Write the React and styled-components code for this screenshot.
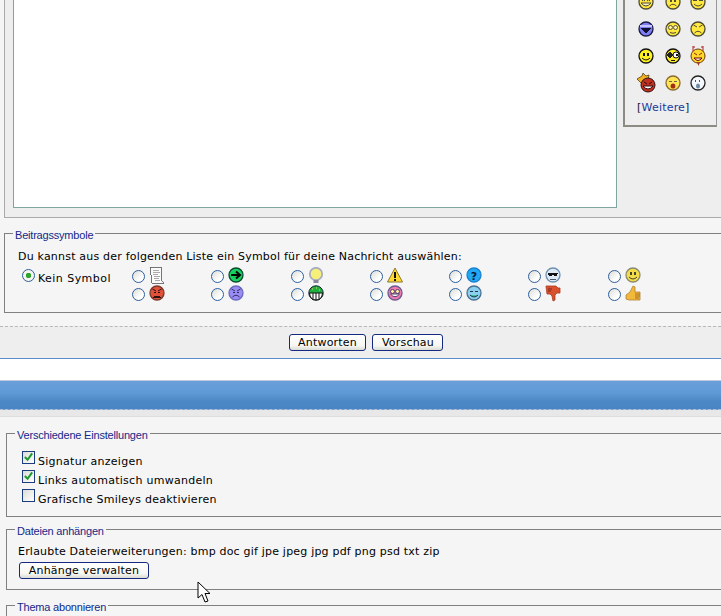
import React from "react";
import styled, { createGlobalStyle } from "styled-components";

const GlobalStyle = createGlobalStyle`
  html, body {
    margin: 0;
    padding: 0;
    background: #f5f5f5;
  }
`;

const Face = ({ fill = "#ffe840", line = "#4f4a35", children }) => (
  <svg width="16" height="16" viewBox="0 0 16 16" shapeRendering="crispEdges">
    <circle cx="8" cy="8" r="7" fill={fill} stroke={line} strokeWidth="1.3" shapeRendering="auto" />
    {children}
  </svg>
);

const Eyes = ({ color = "#333" }) => (
  <>
    <rect x="5" y="5" width="2" height="3" fill={color} />
    <rect x="9" y="5" width="2" height="3" fill={color} />
  </>
);

const RingEyes = ({ color = "#554" }) => (
  <>
    <circle cx="5.5" cy="6.5" r="2" fill="#fff3a0" stroke={color} shapeRendering="auto" />
    <circle cx="10.5" cy="6.5" r="2" fill="#fff3a0" stroke={color} shapeRendering="auto" />
  </>
);

const Smile = ({ color = "#333" }) => (
  <path d="M4 10 Q8 14 12 10" fill="none" stroke={color} shapeRendering="auto" />
);

const Frown = ({ color = "#333" }) => (
  <path d="M4.5 12 Q8 8.5 11.5 12" fill="none" stroke={color} shapeRendering="auto" />
);

const Brows = ({ color = "#333" }) => (
  <path d="M3.5 4 L7 6 M12.5 4 L9 6" fill="none" stroke={color} shapeRendering="auto" />
);

const icons = {
  laugh: (
    <Face>
      <path d="M4 7 Q5.5 4.5 7 7 M9 7 Q10.5 4.5 12 7" fill="none" stroke="#4f4a35" shapeRendering="auto" />
      <path d="M3 9 H13 Q8 15 3 9Z" fill="#fff6c0" stroke="#4f4a35" shapeRendering="auto" />
    </Face>
  ),
  unsure: (
    <Face>
      <path d="M4 5 H7 M9 5 H12" stroke="#6a6548" />
      <rect x="5" y="6" width="2" height="2" fill="#4f4a35" />
      <rect x="9" y="6" width="2" height="2" fill="#4f4a35" />
      <Frown color="#4f4a35" />
    </Face>
  ),
  shades: (
    <Face>
      <rect x="3" y="4" width="4" height="3" fill="#4f4a35" />
      <rect x="9" y="4" width="4" height="3" fill="#4f4a35" />
      <rect x="3" y="4" width="10" height="1" fill="#4f4a35" />
      <Smile color="#4f4a35" />
    </Face>
  ),
  purple: (
    <Face fill="#7d7df5" line="#1a1a40">
      <rect x="2" y="4" width="12" height="2" fill="#c5c5ff" />
      <path d="M2.5 7 H13.5 L8 13Z" fill="#101030" />
    </Face>
  ),
  rolleyes: (
    <Face>
      <RingEyes />
      <path d="M5 11.5 Q8 13 11 11.5" fill="none" stroke="#4f4a35" shapeRendering="auto" />
    </Face>
  ),
  frown: (
    <Face>
      <Brows color="#4f4a35" />
      <Frown color="#4f4a35" />
    </Face>
  ),
  smile: (
    <Face fill="#ffef20" line="#111">
      <Eyes color="#111" />
      <Smile color="#111" />
    </Face>
  ),
  wink: (
    <Face fill="#ffef20" line="#111">
      <circle cx="5" cy="7" r="2.6" fill="#222" />
      <circle cx="11" cy="7" r="3" fill="#fff" stroke="#111" shapeRendering="auto" />
      <rect x="11" y="6" width="2" height="2" fill="#111" />
      <path d="M6 12 H10" stroke="#111" />
    </Face>
  ),
  devil: (
    <svg width="16" height="20" viewBox="0 0 16 20">
      <path d="M3 5 L3 0 M13 5 L13 0 M3 1 H5 M13 1 H11" stroke="#b02020" fill="none" />
      <circle cx="8" cy="10" r="7" fill="#ffd92a" stroke="#6a3a10" />
      <path d="M4 7 L7 9 M12 7 L9 9" stroke="#a02010" />
      <path d="M4 12 H12 Q8 17 4 12Z" fill="#fff" stroke="#700" />
      <path d="M7 16 H10 L8.5 20Z" fill="#a03a20" />
    </svg>
  ),
  king: (
    <svg width="20" height="20" viewBox="0 0 20 20">
      <path d="M1 6 L6 3 L7 0 L10 3 L13 2 L12 7 L5 10Z" fill="#f0b020" stroke="#5a4010" strokeWidth="0.8" />
      <circle cx="12" cy="12" r="7" fill="#c03020" stroke="#301010" />
      <path d="M7 13 H17 Q12 19 7 13Z" fill="#fff" stroke="#301010" />
      <path d="M8 9 L11 11 M16 9 L13 11" stroke="#301010" />
    </svg>
  ),
  yawn: (
    <Face fill="#ffe455" line="#8a6a30">
      <path d="M4 6 H7 M9 6 H12" stroke="#664" />
      <ellipse cx="8" cy="11" rx="2.4" ry="2.6" fill="#a03010" shapeRendering="auto" />
    </Face>
  ),
  ghost: (
    <Face fill="#f4f8fc" line="#222">
      <rect x="5" y="5" width="1" height="2" fill="#555" />
      <rect x="9" y="5" width="1" height="2" fill="#555" />
      <ellipse cx="8" cy="11" rx="2" ry="2.6" fill="#6a8aa8" shapeRendering="auto" />
    </Face>
  ),
  note: (
    <svg width="16" height="17" viewBox="0 0 16 17" shapeRendering="crispEdges">
      <path d="M1 0 H12 V13 L15 16 H3 Z" fill="#fafafa" stroke="#555" strokeWidth="0.8" />
      <path d="M4 3 H10 M4 5 H11 M4 7 H9 M5 9 H11 M5 11 H10 M6 13 H11" stroke="#aaa" />
    </svg>
  ),
  angry: (
    <Face fill="#e0523a" line="#7a3a2a">
      <Brows color="#301010" />
      <rect x="5" y="7" width="2" height="1" fill="#301010" />
      <rect x="9" y="7" width="2" height="1" fill="#301010" />
      <path d="M4 12 H12 M5 11 H11" stroke="#301010" />
    </Face>
  ),
  arrow: (
    <Face fill="#18d060" line="#0a4a30">
      <path d="M3 8 H11 M8 4.5 L12 8 L8 11.5" fill="none" stroke="#000" strokeWidth="2" shapeRendering="auto" />
    </Face>
  ),
  sadPurple: (
    <Face fill="#9a8af5" line="#6a6ac0">
      <Brows color="#303060" />
      <rect x="5" y="7" width="2" height="1" fill="#303060" />
      <rect x="9" y="7" width="2" height="1" fill="#303060" />
      <Frown color="#303060" />
    </Face>
  ),
  bulb: (
    <svg width="16" height="17" viewBox="0 0 16 17">
      <circle cx="8" cy="7" r="6.2" fill="#f6f07a" stroke="#a8aec0" strokeWidth="1.8" />
      <rect x="5.5" y="13" width="5" height="3" fill="#8a8a9a" />
    </svg>
  ),
  grin: (
    <svg width="16" height="16" viewBox="0 0 16 16">
      <circle cx="8" cy="8" r="7.2" fill="#20b040" stroke="#123" />
      <path d="M1.5 8 H14.5 Q14 15 8 15 Q2 15 1.5 8Z" fill="#fff" stroke="#111" />
      <path d="M5 8 V15 M8 8 V15 M11 8 V15" stroke="#111" />
      <path d="M4 4 H5 M8 3 H9 M11 5 H12" stroke="#e8e060" />
    </svg>
  ),
  warning: (
    <svg width="16" height="16" viewBox="0 0 16 16">
      <path d="M8 1 L15.5 15 H0.5Z" fill="#ffd830" stroke="#8a7a30" />
      <rect x="7" y="5" width="2" height="6" fill="#111" />
      <rect x="7" y="12" width="2" height="2" fill="#111" />
    </svg>
  ),
  pink: (
    <Face fill="#f07ab0" line="#6a5a90">
      <RingEyes color="#504070" />
      <path d="M3.5 9 H12.5 Q8 14.5 3.5 9Z" fill="#fff" stroke="#504070" shapeRendering="auto" />
    </Face>
  ),
  question: (
    <Face fill="#20a8f5" line="#1a80d0">
      <text x="8" y="12.5" textAnchor="middle" fontSize="11" fontWeight="700" fontFamily="'DejaVu Sans', sans-serif" fill="#0a1a40">?</text>
    </Face>
  ),
  winkBlue: (
    <Face fill="#8ad0f0" line="#4a7090">
      <path d="M4 6 L7 7 M9 7 L12 6" stroke="#234" />
      <path d="M4 10 Q8 14 12 10" fill="#40c0a0" stroke="#234" shapeRendering="auto" />
    </Face>
  ),
  cool: (
    <Face fill="#dceaf6" line="#7090b0">
      <path d="M3 6 H13 L12 9 H9 L8 7 L7 9 H4Z" fill="#111" />
      <path d="M5 12 H11" stroke="#456" />
    </Face>
  ),
  thumbDown: (
    <svg width="16" height="17" viewBox="0 0 16 17">
      <path d="M1 1 H11 L13 3 H15 V8 H12 L10 10 L10 15 L8 16 L7 11 L5 9 H2 Z" fill="#d8502c" stroke="#a83a20" strokeWidth="0.8" />
      <path d="M3 4 H7 M3 6 H6" stroke="#802818" />
    </svg>
  ),
  goldSmile: (
    <Face fill="#f4dc48" line="#8a8a70">
      <Eyes color="#443" />
      <Smile color="#443" />
    </Face>
  ),
  thumbUp: (
    <svg width="16" height="17" viewBox="0 0 16 17">
      <path d="M1 10 L5 7 L8 1 L10 2 L10 7 H15 V15 H4 L1 14Z" fill="#f2b83a" stroke="#b08030" strokeWidth="0.8" />
      <path d="M10 9 H15 M10 11 H15 M10 13 H14" stroke="#a87020" />
    </svg>
  ),
};

const sidebarSmileys = [
  "laugh", "unsure", "shades",
  "purple", "rolleyes", "frown",
  "smile", "wink", "devil",
  "king", "yawn", "ghost",
];

const postIcons = [
  ["note", "angry"],
  ["arrow", "sadPurple"],
  ["bulb", "grin"],
  ["warning", "pink"],
  ["question", "winkBlue"],
  ["cool", "thumbDown"],
  ["goldSmile", "thumbUp"],
];

const CheckMark = () => (
  <svg width="12" height="11" viewBox="0 0 12 11">
    <path d="M2 5 L5 8 L10 1" fill="none" stroke="#1f9a30" strokeWidth="2.2" />
  </svg>
);

const App = () => {
  return (
    <Page>
      <GlobalStyle />
      <ScrolledContent>
        <EditorSection>
          <TextArea />
          <SmileyPanel>
            <SmileyGrid>
              {sidebarSmileys.map((name) => (
                <SmileyCell key={name}>{icons[name]}</SmileyCell>
              ))}
            </SmileyGrid>
            <MoreLine>
              [<MoreLink>Weitere</MoreLink>]
            </MoreLine>
          </SmileyPanel>
        </EditorSection>

        <IconFieldset>
          <Legend>Beitragssymbole</Legend>
          <BodyText>
            Du kannst aus der folgenden Liste ein Symbol für deine Nachricht auswählen:
          </BodyText>
          <IconRows>
            <NoIconCell>
              <Radio $checked />
              <NoIconLabel>Kein Symbol</NoIconLabel>
            </NoIconCell>
            {postIcons.map((column) => (
              <IconColumn key={column[0]}>
                {column.map((name) => (
                  <IconOption key={name}>
                    <Radio />
                    <IconSlot>{icons[name]}</IconSlot>
                  </IconOption>
                ))}
              </IconColumn>
            ))}
          </IconRows>
        </IconFieldset>

        <ButtonBar>
          <Button>Antworten</Button>
          <Button>Vorschau</Button>
        </ButtonBar>

        <WhiteGap />
        <BlueHeader />
        <GreyStrip />

        <OptionsArea>
          <OptionsFieldset>
            <Legend>Verschiedene Einstellungen</Legend>
            <CheckRow>
              <CheckBox>
                <CheckMark />
              </CheckBox>
              Signatur anzeigen
            </CheckRow>
            <CheckRow>
              <CheckBox>
                <CheckMark />
              </CheckBox>
              Links automatisch umwandeln
            </CheckRow>
            <CheckRow>
              <CheckBox />
              Grafische Smileys deaktivieren
            </CheckRow>
          </OptionsFieldset>

          <AttachFieldset>
            <Legend>Dateien anhängen</Legend>
            <AttachText>Erlaubte Dateierweiterungen: bmp doc gif jpe jpeg jpg pdf png psd txt zip</AttachText>
            <WideButton>Anhänge verwalten</WideButton>
          </AttachFieldset>

          <SubscribeFieldset>
            <Legend>Thema abonnieren</Legend>
          </SubscribeFieldset>
        </OptionsArea>
      </ScrolledContent>

      <Cursor width="15" height="23" viewBox="0 0 15 23">
        <path
          d="M1 1 L1 17 L5 13.5 L8 21 L11 20 L8 12.5 L13 12.5 Z"
          fill="#fff"
          stroke="#000"
          strokeWidth="1"
        />
      </Cursor>
    </Page>
  );
};

const Page = styled.div`
  position: relative;
  width: 721px;
  height: 616px;
  overflow: hidden;
  background: #f5f5f5;
  color: #000;
  font-family: "DejaVu Sans", Verdana, sans-serif;
  font-size: 11px;
  letter-spacing: 0.2px;
`;

const ScrolledContent = styled.div`
  margin-top: -20px;
`;

const EditorSection = styled.div`
  display: flex;
  align-items: flex-start;
  gap: 6px;
  height: 238px;
  box-sizing: border-box;
  margin-left: 4px;
  padding-left: 8px;
  background: #eeeeee;
  border-left: 1px solid #aaaaaa;
  border-bottom: 1px solid #aaaaaa;
`;

const TextArea = styled.div`
  width: 602px;
  height: 226px;
  flex-shrink: 0;
  background: #fff;
  border: 1px solid #7fa5a0;
`;

const SmileyPanel = styled.div`
  width: 94px;
  height: 147px;
  box-sizing: border-box;
  padding-top: 8px;
  border-left: 2px solid #8c8c84;
  border-right: 1px solid #999;
  border-bottom: 2px solid #8c8c84;
  background: #eeeeee;
`;

const SmileyGrid = styled.div`
  display: grid;
  grid-template-columns: 27px 27px 23px;
  grid-auto-rows: 27px;
  margin-left: 7px;
`;

const SmileyCell = styled.div`
  display: flex;
  align-items: center;
  justify-content: center;
`;

const MoreLine = styled.div`
  margin: 5px 0 0 12px;
  color: #222;
`;

const MoreLink = styled.span`
  color: #1a3a9a;
`;

const Fieldset = styled.fieldset`
  margin: 0 -20px 0 0;
  padding: 0;
  min-width: 0;
  border: 1px solid #808080;
  border-right: none;
`;

const Legend = styled.legend`
  margin-left: 8px;
  padding: 4px 2px 0;
  color: #13288a;
  font-family: "Liberation Sans", Arial, sans-serif;
  font-size: 11px;
  line-height: 13px;
  letter-spacing: -0.2px;
`;

const IconFieldset = styled(Fieldset)`
  margin-top: 7px;
  margin-left: 4px;
  height: 88px;
  box-sizing: border-box;
  padding-top: 8px;
`;

const BodyText = styled.div`
  margin-left: 13px;
  line-height: 14px;
`;

const IconRows = styled.div`
  display: flex;
  margin-top: 2px;
  margin-left: 17px;
`;

const NoIconCell = styled.div`
  display: flex;
  align-items: flex-start;
  gap: 3px;
  width: 110px;
  line-height: 14px;
  flex-shrink: 0;
`;

const NoIconLabel = styled.span`
  margin-top: 6px;
  letter-spacing: 0.45px;
`;

const IconColumn = styled.div`
  display: flex;
  flex-direction: column;
  width: 79.3px;
  flex-shrink: 0;
`;

const IconOption = styled.div`
  display: flex;
  align-items: center;
  height: 18px;
  gap: 4px;
`;

const IconSlot = styled.span`
  display: flex;
  width: 16px;
  height: 17px;
  align-items: center;
`;

const Radio = styled.span`
  display: inline-block;
  width: 13px;
  height: 13px;
  box-sizing: border-box;
  border: 1px solid #2c5f9e;
  border-radius: 50%;
  flex-shrink: 0;
  margin-top: 3px;
  background: ${(props) =>
    props.$checked
      ? "radial-gradient(circle, #2fa52f 0 2.5px, #f5f5f0 3px)"
      : "linear-gradient(135deg, #dcdcd6, #ffffff 70%)"};
`;

const ButtonBar = styled.div`
  display: flex;
  justify-content: center;
  gap: 6px;
  margin-top: 13px;
  height: 33px;
  box-sizing: border-box;
  padding: 7px 0 0 11px;
  background: #eeeeee;
  border-top: 1px dashed #b8b8b8;
  border-bottom: 1px solid #5b8ccc;
`;

const Button = styled.button`
  height: 17px;
  padding: 0 8.5px;
  border: 1px solid #14297f;
  border-radius: 3px;
  background: linear-gradient(#ffffff, #f6f6f2 70%, #dcdcd6);
  color: #000;
  font-family: "DejaVu Sans", Verdana, sans-serif;
  font-size: 11px;
  line-height: 13px;
  letter-spacing: 0.2px;
`;

const WhiteGap = styled.div`
  height: 21px;
  background: #fff;
`;

const BlueHeader = styled.div`
  height: 30px;
  box-sizing: border-box;
  border-top: 1px solid #c4c8e0;
  border-bottom: 1px dashed #b4bcd8;
  background: linear-gradient(#6aa0da, #5f9ad6 12px, #5690cd 16px, #4d88c6 20px, #4a85c3);
`;

const GreyStrip = styled.div`
  height: 7px;
  box-sizing: border-box;
  background: #e8e8e8;
  border-bottom: 1px solid #dddddd;
`;

const OptionsArea = styled.div`
  padding: 8px 0 0 6px;
`;

const OptionsFieldset = styled(Fieldset)`
  height: 92px;
  box-sizing: border-box;
  padding-top: 8px;
`;

const CheckRow = styled.div`
  display: flex;
  align-items: flex-end;
  gap: 3px;
  height: 19px;
  margin-left: 15px;
  line-height: 14px;
  letter-spacing: 0.27px;
`;

const CheckBox = styled.span`
  display: flex;
  align-items: center;
  justify-content: center;
  width: 13px;
  height: 13px;
  box-sizing: border-box;
  border: 1px solid #1c3c80;
  background: linear-gradient(135deg, #dcdcd6, #ffffff);
  margin-bottom: 5px;
`;

const AttachFieldset = styled(Fieldset)`
  height: 69px;
  margin-top: 4px;
  box-sizing: border-box;
  padding-top: 7px;
`;

const AttachText = styled.div`
  margin-left: 11px;
  line-height: 14px;
`;

const WideButton = styled(Button)`
  display: block;
  width: 130px;
  margin: 3px 0 0 12px;
`;

const SubscribeFieldset = styled(Fieldset)`
  height: 42px;
  margin-top: 7px;
  box-sizing: border-box;
`;

const Cursor = styled.svg`
  position: absolute;
  left: 197px;
  top: 581px;
`;

export default App;
